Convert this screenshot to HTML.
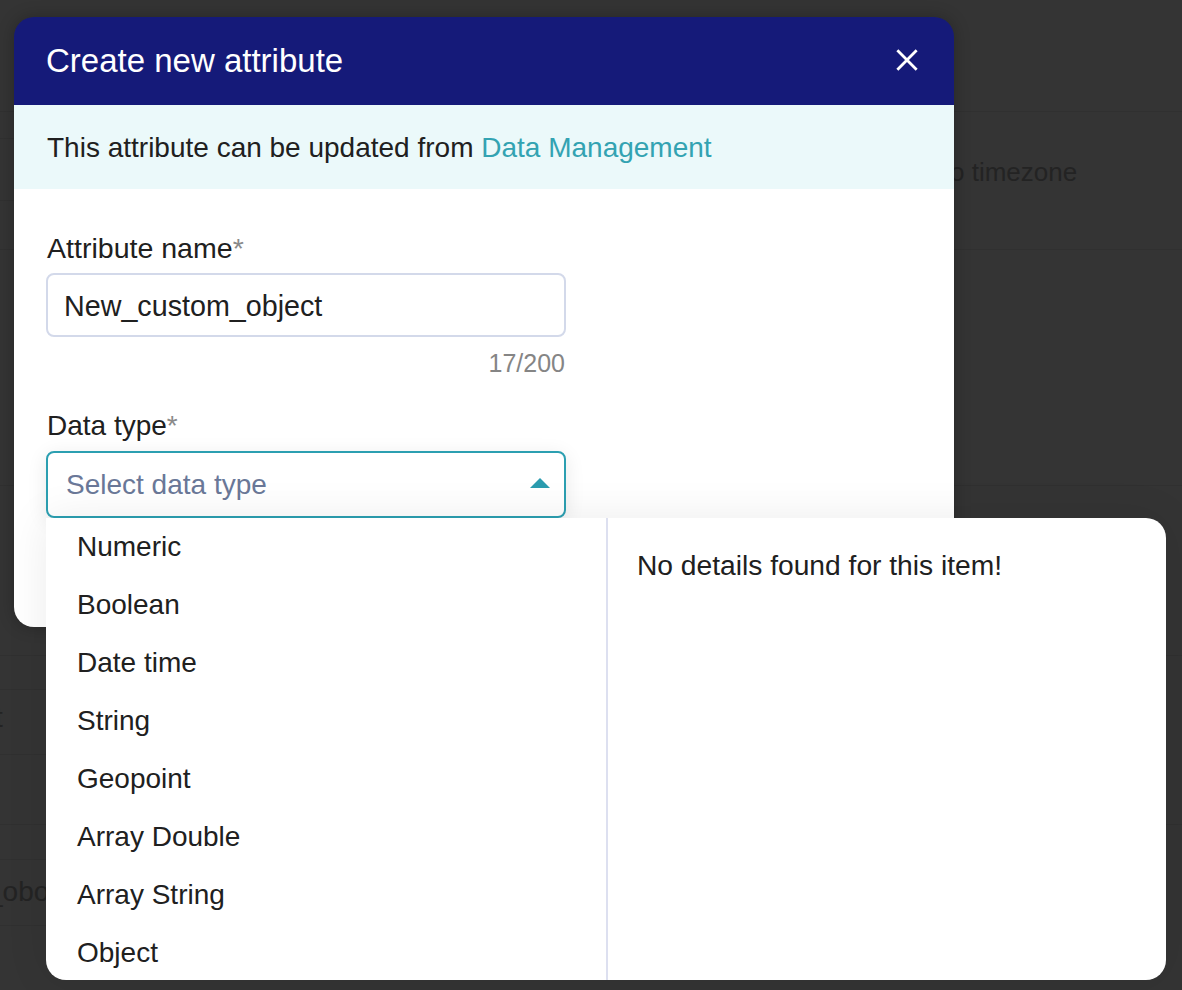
<!DOCTYPE html>
<html><head><meta charset="utf-8">
<style>
html,body{margin:0;padding:0;}
body{width:1182px;height:990px;overflow:hidden;background:#343434;font-family:"Liberation Sans",sans-serif;position:relative;color:#202020;}
.abs{position:absolute;white-space:nowrap;}
.bgline{position:absolute;left:0;width:1182px;height:1px;background:#303030;}
.bgtxt{position:absolute;white-space:nowrap;color:#232323;font-size:26px;line-height:30px;}
#modal{position:absolute;left:14px;top:17px;width:940px;height:610px;border-radius:20px;box-shadow:0 0 16px rgba(0,0,0,0.25);}
#mbody{position:absolute;left:0;top:172px;width:940px;height:438px;background:#fff;border-radius:0 0 20px 20px;}
#hdr{position:absolute;left:0;top:0;width:940px;height:88px;background:#151a79;border-radius:20px 20px 0 0;}
#banner{position:absolute;left:0;top:88px;width:940px;height:84px;background:#ebf9fa;}
.t28{font-size:28px;line-height:40px;}
#input{position:absolute;left:46px;top:273px;width:516px;height:60px;border:2px solid #d3d9ea;border-radius:8px;background:#fff;}
#select{position:absolute;left:46px;top:451px;width:516px;height:63px;border:2px solid #2c9fb1;border-radius:8px;background:#fff;box-shadow:0 4px 20px rgba(0,0,0,0.09);}
#dd{position:absolute;left:46px;top:518px;width:1120px;height:462px;background:#fff;border-radius:0 20px 20px 20px;box-shadow:0 0 44px rgba(0,0,0,0.08);}
#div{position:absolute;left:560px;top:0;width:2px;height:462px;background:#dde0f0;}
</style></head><body>
<div class="bgline" style="top:111px"></div>
<div class="bgline" style="top:249px"></div>
<div class="bgline" style="top:138px;width:14px"></div>
<div class="bgline" style="top:200px;width:14px"></div>
<div class="bgline" style="top:485px"></div>
<div class="bgline" style="top:655px"></div>
<div class="bgline" style="top:689px;width:46px"></div>
<div class="bgline" style="top:754px;width:46px"></div>
<div class="bgline" style="top:824px"></div>
<div class="bgline" style="top:859px;width:46px"></div>
<div class="bgline" style="top:925px;width:46px"></div>
<div class="bgtxt" style="left:950px;top:157px">o timezone</div>
<div class="bgtxt" style="left:-5px;top:703px;font-size:28px">t</div>
<div class="bgtxt" style="left:-13px;top:877px;font-size:28px">_obo</div>

<div id="modal">
  <div id="mbody"></div>
  <div id="hdr">
    <div class="abs" style="left:32px;top:24px;font-size:33px;line-height:40px;color:#fff">Create new attribute</div>
    <svg class="abs" style="left:879px;top:28.6px" width="28" height="28" viewBox="0 0 28 28"><path d="M4.35 4.35 L23.65 23.65 M23.65 4.35 L4.35 23.65" stroke="#fff" stroke-width="2.8"/></svg>
  </div>
  <div id="banner">
    <div class="abs t28" style="left:33px;top:23px">This attribute can be updated from <span style="color:#33a3b2">Data Management</span></div>
  </div>
</div>

<div class="abs" style="left:47px;top:228px;font-size:28.55px;line-height:40px">Attribute name<span style="color:#8a8a8a">*</span></div>
<div id="input"></div>
<div class="abs" style="left:64px;top:285.5px;font-size:28.7px;line-height:40px">New_custom_object</div>
<div class="abs" style="right:617px;top:347px;font-size:25px;line-height:32px;color:#858585">17/200</div>
<div class="abs t28" style="left:47px;top:406px">Data type<span style="color:#8a8a8a">*</span></div>
<div id="select">
  <svg class="abs" style="left:481px;top:24px" width="22" height="12" viewBox="0 0 22 12"><path d="M1 11 L11 1 L21 11 Z" fill="#2b9caf"/></svg>
</div>
<div class="abs t28" style="left:66px;top:465px;color:#6a7898">Select data type</div>

<div id="dd">
  <div id="div"></div>
  <div class="abs t28" style="left:31px;top:9px">Numeric</div>
  <div class="abs t28" style="left:31px;top:67px">Boolean</div>
  <div class="abs t28" style="left:31px;top:125px">Date time</div>
  <div class="abs t28" style="left:31px;top:183px">String</div>
  <div class="abs t28" style="left:31px;top:241px">Geopoint</div>
  <div class="abs t28" style="left:31px;top:299px">Array Double</div>
  <div class="abs t28" style="left:31px;top:357px">Array String</div>
  <div class="abs t28" style="left:31px;top:415px">Object</div>
  <div class="abs" style="left:591px;top:27px;font-size:28.2px;line-height:40px">No details found for this item!</div>
</div>
</body></html>
